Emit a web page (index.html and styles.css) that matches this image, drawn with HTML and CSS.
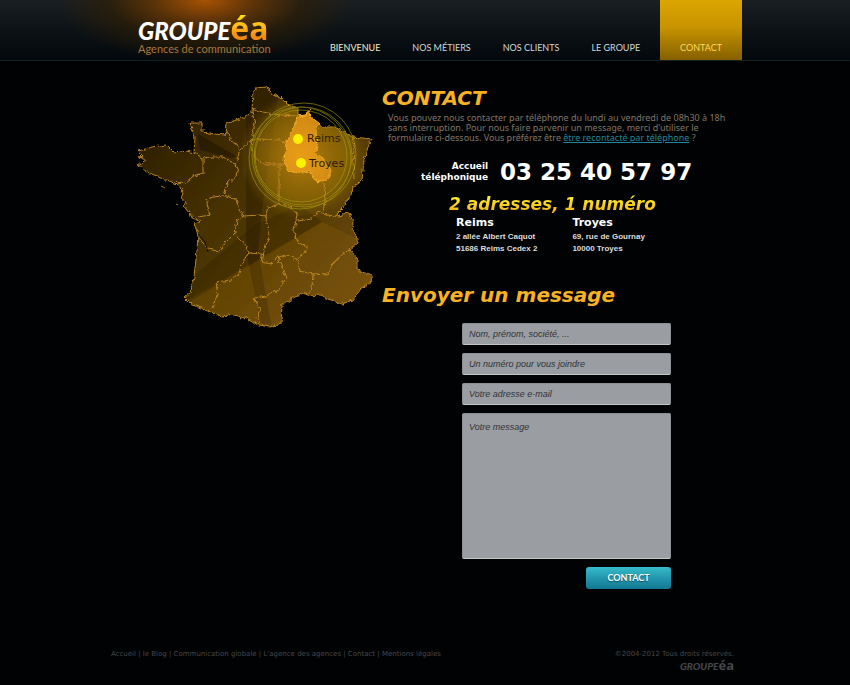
FILE: index.html
```html
<!DOCTYPE html>
<html lang="fr">
<head>
<meta charset="utf-8">
<meta name="viewport" content="width=device-width, initial-scale=1">
<title>Contact - Groupe éa</title>
<link rel="stylesheet" href="styles.css">
</head>
<body>
<header class="site-header">
  <div class="wrap header-row">
    <a class="brand" href="#">
      <span class="logo"><span class="logo-word">GROUPE</span><span class="logo-accent">éa</span></span>
      <span class="tagline">Agences de communication</span>
    </a>
    <nav class="main-nav">
      <a href="#" class="home">BIENVENUE</a>
      <a href="#">NOS MÉTIERS</a>
      <a href="#">NOS CLIENTS</a>
      <a href="#">LE GROUPE</a>
      <a href="#" class="active">CONTACT</a>
    </nav>
  </div>
</header>

<main class="wrap main-grid">
  <svg class="map" viewBox="130 80 250 250" role="img" aria-label="Carte de France : Reims et Troyes">
    <defs>
      <linearGradient id="land" x1="135" y1="120" x2="350" y2="310" gradientUnits="userSpaceOnUse">
        <stop offset="0" stop-color="#2c1e02"/>
        <stop offset=".5" stop-color="#4a3405"/>
        <stop offset="1" stop-color="#6e4c08"/>
      </linearGradient>
      <radialGradient id="halo" cx="303" cy="156" r="64" gradientUnits="userSpaceOnUse">
        <stop offset="0" stop-color="#d89410" stop-opacity=".75"/>
        <stop offset=".7" stop-color="#a87c08" stop-opacity=".55"/>
        <stop offset="1" stop-color="#806008" stop-opacity="0"/>
      </radialGradient>
      <radialGradient id="region" cx="300" cy="155" r="36" gradientUnits="userSpaceOnUse">
        <stop offset="0" stop-color="#e99d18"/>
        <stop offset="1" stop-color="#d38b12"/>
      </radialGradient>
      <filter id="rough" x="125" y="75" width="260" height="260" filterUnits="userSpaceOnUse">
        <feTurbulence type="fractalNoise" baseFrequency=".25" numOctaves="2" seed="4"/>
        <feDisplacementMap in="SourceGraphic" scale="5" xChannelSelector="R" yChannelSelector="G"/>
      </filter>
      <path id="coast" d="M253 91L255 88 267 87 272 94 280 97 287 104 298 108 298 116 306 115 309 110 311 117 320 124 322 127 335 127 345 133 353 137 372 139 368 147 364 160 362 180 359 183 353 187 351 195 345 203 343 208 338 213 337 217 342 214 350 213 354 223 352 230 358 238 358 243 350 249 357 258 357 270 365 273 373 275 371 282 360 290 353 300 342 304 328 299 320 295 310 296 303 293 295 297 282 305 281 323 270 327 258 325 245 317 241 319 233 314 223 317 205 310 190 303 184 297 190 293 194 277 197 250 198 235 194 223 201 221 192 217 183 205 187 203 180 197 183 190 175 183 164 179 147 172 138 165 146 160 138 157 143 156 138 151 152 147 167 145 175 153 187 151 194 153 195 138 190 123 202 123 202 132 215 134 225 135 226 123 242 118 252 112Z"/>
      <clipPath id="inland"><use href="#coast"/></clipPath>
    </defs>
    <use href="#coast" fill="url(#land)" filter="url(#rough)"/>
    <g clip-path="url(#inland)">
      <path d="M198 134L236 156 232 158 200 150Z" fill="#130c00" opacity=".4"/>
      <path d="M246 80L280 80 262 210 258 250 272 330 262 330 246 250Z" fill="#201500" opacity=".36"/>
      <path d="M184 302L322 222 300 205 255 225 197 273Z" fill="#231700" opacity=".25"/>
      <path d="M184 305L322 222 375 247 380 330 184 330Z" fill="#946509" opacity=".25"/>
      <circle cx="303" cy="156" r="64" fill="url(#halo)"/>
    </g>
    <g filter="url(#rough)">
      <g class="borders">
        <use href="#coast"/>
        <path d="M252 108L262 112 280 115 298 116M252 112L255 124 252 139 258 139 281 140 286 145M252 139L239 151 237 144 231 141 228 130 225 135"/>
        <path d="M194 153L203 158 211 157 223 157 236 164 239 152M203 158L203 173 194 176 186 182 177 184M236 164L238 174 227 184 223 195M223 195L206 199 210 215 198 217M223 195L236 199 239 210 244 216 260 215M244 216L237 220 235 233 225 243 219 251 208 249 198 237"/>
        <path d="M235 236L245 244 249 253 242 262 239 273 231 280 216 282 218 295 212 308"/>
        <path d="M252 139L251 148 257 160 265 164 279 164 279 186 279 204 268 208 265 216 260 215M279 204L290 206 297 214 294 231 298 243 307 247 305 253 297 259 286 255 278 257 271 264 262 262 266 244 270 234 265 216"/>
        <path d="M297 221L312 219 319 211 326 215 337 216M324 183L325 202 323 211M249 253L261 254 262 263M278 257L286 278 279 290 266 296 254 298 260 309 257 318 262 324M297 259L299 271 313 274 328 275 332 264 343 254 350 249M313 274L312 287 308 295M353 137L354 151 353 162 354 178M286 164L279 164"/>
      </g>
      <path class="champagne" d="M298 116L306 115 309 110 311 117 320 124 316 130 317 146 315 153 323 158 331 171 327 179 317 182 309 171 298 173 288 171 284 160 286 144 292 132Z"/>
    </g>
    <g class="rings">
      <circle cx="301" cy="156" r="46"/>
      <circle cx="303" cy="156" r="49"/>
      <circle cx="304" cy="155" r="52"/>
      <circle cx="300" cy="158" r="51"/>
    </g>
    <circle class="pin" cx="298" cy="139" r="5"/>
    <circle class="pin" cx="301" cy="163" r="5"/>
    <text class="city" x="307" y="142">Reims</text>
    <text class="city" x="309" y="167">Troyes</text>
    <path class="isles" d="M161 186l4 2M176 204l2 1M192 218l6 2M194 225l4 6"/>
    <path class="estuary" d="M198 234l7 8 3 10"/>
  </svg>

  <div class="content">
    <h1>CONTACT</h1>
    <p class="intro">Vous pouvez nous contacter par téléphone du lundi au vendredi de 08h30 à 18h<br>sans interruption. Pour nous faire parvenir un message, merci d'utiliser le<br>formulaire ci-dessous. Vous préférez être <a href="#">être recontacté par téléphone</a> ?</p>

    <div class="phone">
      <span class="phone-label">Accueil<br>téléphonique</span>
      <strong class="phone-number">03 25 40 57 97</strong>
    </div>

    <h2 class="sub">2 adresses, 1 numéro</h2>
    <div class="offices">
      <address><strong>Reims</strong>2 allée Albert Caquot<br>51686 Reims Cedex 2</address>
      <address><strong>Troyes</strong>69, rue de Gournay<br>10000 Troyes</address>
    </div>

    <h2 class="form-title">Envoyer un message</h2>
    <form class="message-form">
      <input type="text" aria-label="Nom, prénom, société" placeholder="Nom, prénom, société, ...">
      <input type="tel" aria-label="Un numéro pour vous joindre" placeholder="Un numéro pour vous joindre">
      <input type="email" aria-label="Votre adresse e-mail" placeholder="Votre adresse e-mail">
      <textarea aria-label="Votre message" placeholder="Votre message"></textarea>
      <button type="button">CONTACT</button>
    </form>
  </div>
</main>

<footer class="wrap site-footer">
  <nav class="footer-nav"><a href="#">Accueil</a> | <a href="#">le Blog</a> | <a href="#">Communication globale</a> | <a href="#">L'agence des agences</a> | <a href="#">Contact</a> | <a href="#">Mentions légales</a></nav>
  <div class="legal">
    <span>©2004-2012 Tous droits réservés.</span>
    <span class="logo logo-small"><span class="logo-word">GROUPE</span><span class="logo-accent">éa</span></span>
  </div>
</footer>
</body>
</html>
```
FILE: styles.css
```css
* {
  box-sizing: border-box;
}

body {
  margin: 0;
  background: #010204;
  color: #fff;
  font-family: "DejaVu Sans", Verdana, sans-serif;
}

a {
  color: inherit;
  text-decoration: none;
}

.wrap {
  max-width: 634px;
  margin: 0 auto;
}

/* Header */
.site-header {
  border-bottom: 1px solid #152022;
  background: linear-gradient(#1a1f23, #0c1216 50%, #03080c);
}

.header-row {
  display: flex;
  justify-content: space-between;
  height: 60px;
  position: relative;
}

.header-row::before {
  content: "";
  position: absolute;
  inset: 0 auto 0 -60px;
  width: 320px;
  background: radial-gradient(ellipse 150px 64px at 157px 0, #a85203, #6b3803cc 34%, #33200299 64%, transparent);
}

.brand {
  position: relative;
  display: flex;
  flex-direction: column;
  padding: 16px 0 0 30px;
}

.logo {
  display: flex;
  align-items: baseline;
}

.logo-word {
  font: italic 900 24px/24px Lato, sans-serif;
}

.logo-accent {
  margin-top: -8px;
  padding-top: 8px;
  font: 700 32px/24px "Open Sans", sans-serif;
  color: transparent;
  background: linear-gradient(#ffe014 25%, #ffb61c 60%, #f08a12 90%);
  background-clip: text;
}

.tagline {
  color: #a9783a;
  font: 11px/12px Lato, sans-serif;
}

.main-nav {
  display: flex;
  font: 9px/12px Lato, sans-serif;
  color: #d0d8da;
}

.main-nav a {
  padding: 42px 16px 0;
}

.main-nav .home {
  color: #f0edc8;
}

.main-nav .active {
  margin-left: 4px;
  padding: 42px 20px 0;
  color: #ffd95a;
  background: linear-gradient(#dca600, #c89400 45%, #856000);
}

/* Main */
.main-grid {
  display: grid;
  grid-template-columns: 250px 1fr;
  gap: 2px;
  padding: 19px 0 0 22px;
}

.map {
  display: block;
  width: 100%;
  height: auto;
}

.borders {
  fill: none;
  stroke: #b98520;
  stroke-width: 1;
  stroke-linejoin: round;
}

.champagne {
  fill: url(#region);
  stroke: #f3ad22;
}

.rings {
  fill: none;
  stroke: #aaa00a;
  stroke-width: 1;
  opacity: .6;
}

.pin {
  fill: #fff200;
}

.city {
  font: 11px "DejaVu Sans", sans-serif;
  fill: #2c1d05;
}

.isles {
  fill: none;
  stroke: #a37519;
}

.estuary {
  fill: none;
  stroke: #120b00;
}

h1,
h2 {
  margin: 0;
  font-size: 20px;
  line-height: 24px;
  font-style: italic;
  color: #f9b222;
}

h1 {
  padding-top: 6px;
}

.intro {
  margin: 3px 0 0 6px;
  color: #817665;
  font: 9px/10px "Noto Sans", sans-serif;
}

.intro a {
  color: #218799;
  text-decoration: underline;
}

.phone {
  display: flex;
  align-items: center;
  gap: 12px;
  margin: 14px 0 0 39px;
}

.phone-label {
  font-size: 9px;
  font-weight: 700;
  line-height: 11px;
  text-align: right;
}

.phone-number {
  font-size: 23px;
  line-height: 30px;
}

.sub {
  width: max-content;
  margin: 6px 0 0 67px;
  font-size: 17px;
  line-height: 22px;
  color: transparent;
  background: linear-gradient(#fff02a 20%, #f3b217 85%);
  background-clip: text;
}

.offices {
  display: flex;
  gap: 35px;
  margin-left: 74px;
}

address {
  color: #ddd;
  font: 700 8px/12px "Liberation Sans", Arial, sans-serif;
}

address strong {
  display: block;
  color: #fff;
  font: 700 11px/16px "DejaVu Sans", sans-serif;
}

.form-title {
  margin-top: 28px;
}

.message-form {
  display: flex;
  flex-direction: column;
  gap: 8px;
  width: 209px;
  margin: 16px 0 0 80px;
}

.message-form input,
.message-form textarea {
  display: block;
  width: 100%;
  height: 22px;
  margin: 0;
  padding: 1px 6px;
  border: 1px solid #8c8f94;
  border-bottom-color: #c3c5c7;
  border-radius: 2px;
  background: #9a9da2;
  color: #303338;
  font: italic 9px/12px "Liberation Sans", Arial, sans-serif;
}

.message-form textarea {
  height: 146px;
  padding-top: 7px;
  resize: none;
}

.message-form ::placeholder {
  color: #303338;
  opacity: 1;
}

.message-form button {
  align-self: flex-end;
  width: 85px;
  height: 22px;
  padding: 0;
  border: 0;
  border-radius: 3px;
  background: linear-gradient(#35bccb, #2397ad 50%, #127993);
  color: #fff;
  font: 700 9px/12px Lato, sans-serif;
  text-shadow: 0 1px 1px #08505f;
}

/* Footer */
.site-footer {
  display: flex;
  justify-content: space-between;
  padding: 61px 8px 12px 3px;
  color: #45474a;
  font-size: 7px;
  line-height: 9px;
}

.legal {
  display: flex;
  flex-direction: column;
  align-items: flex-end;
}

.logo-small .logo-word {
  font-size: 10px;
  line-height: 12px;
}

.logo-small .logo-accent {
  margin: 0;
  padding: 0;
  color: #45474a;
  background: none;
  font-size: 13px;
  line-height: 12px;
}
```
